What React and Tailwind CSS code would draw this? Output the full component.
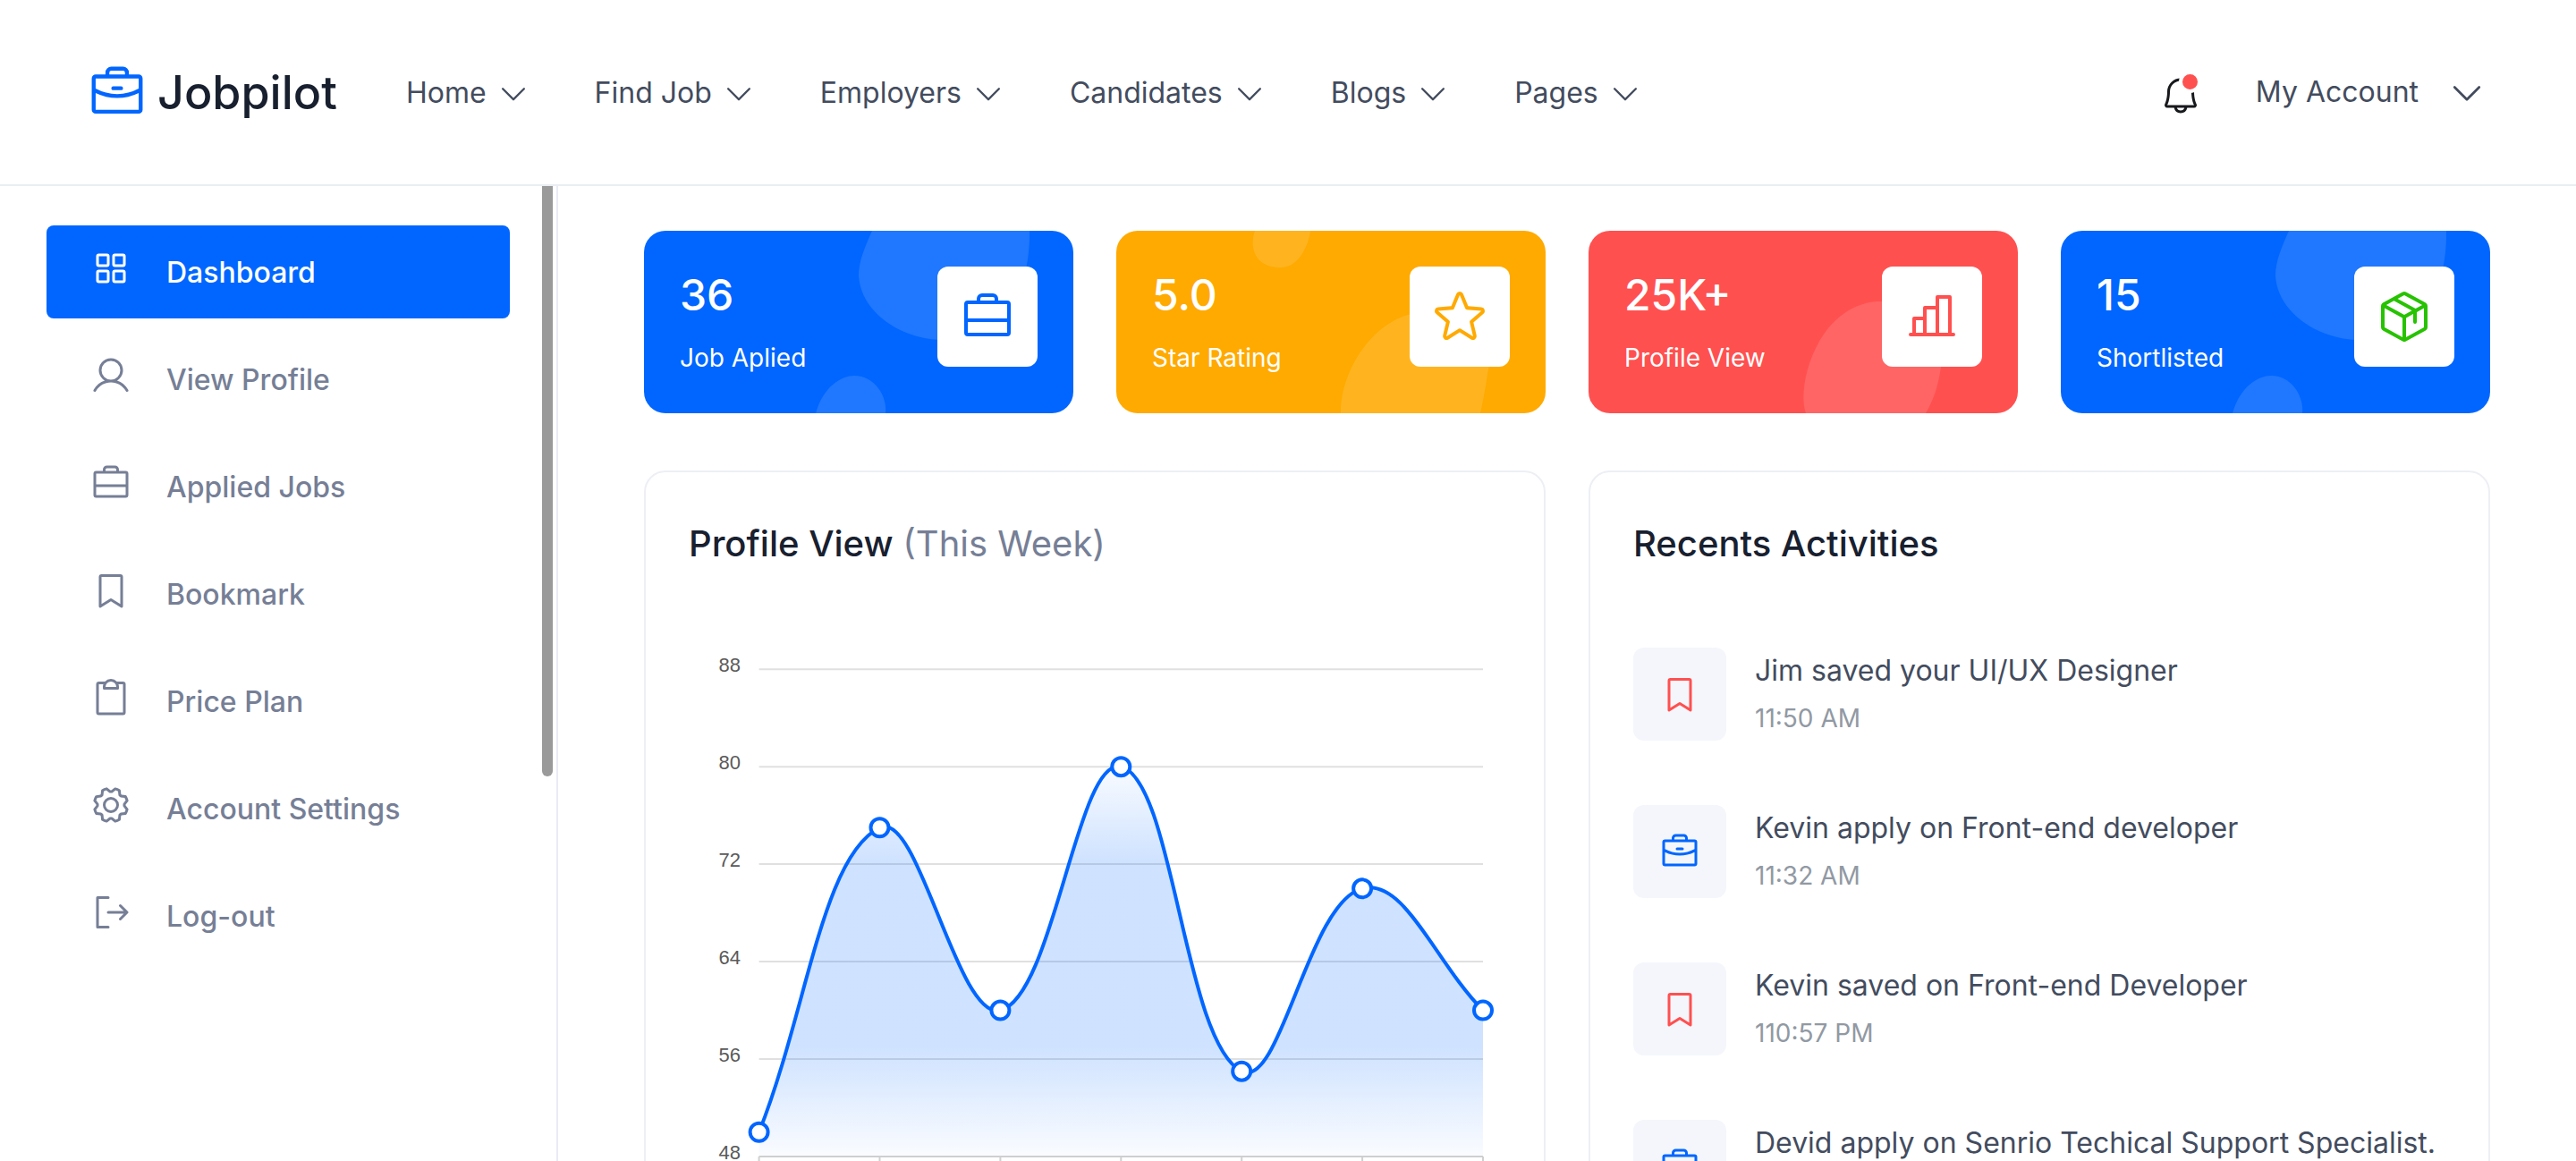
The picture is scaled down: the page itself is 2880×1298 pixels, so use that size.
import React from "react";
import {
  PiBell,
  PiBookmarkSimple,
  PiBriefcase,
  PiCaretDown,
  PiChartBar,
  PiClipboard,
  PiGear,
  PiPackage,
  PiSignOut,
  PiSquaresFour,
  PiStar,
  PiUser,
} from "react-icons/pi";

const navItems = ["Home", "Find Job", "Employers", "Candidates", "Blogs", "Pages"];

// briefcase with the straight line, the phosphor one has a curve
const BriefcaseLine = ({ size, className }) => (
  <svg width={size} height={size} viewBox="0 0 256 256" fill="none" stroke="currentColor" strokeWidth="16" strokeLinejoin="round" className={className}>
    <rect x="32" y="64" width="192" height="144" rx="8" />
    <path d="M88 64V48a16 16 0 0 1 16-16h48a16 16 0 0 1 16 16v16" />
    <path d="M32 144H224" />
  </svg>
);

const sideItems = [
  { label: "Dashboard", Icon: PiSquaresFour, active: true },
  { label: "View Profile", Icon: PiUser },
  { label: "Applied Jobs", Icon: BriefcaseLine },
  { label: "Bookmark", Icon: PiBookmarkSimple },
  { label: "Price Plan", Icon: PiClipboard },
  { label: "Account Settings", Icon: PiGear },
  { label: "Log-out", Icon: PiSignOut },
];

const blobsBlue = ["M255 0C246 20 240 35 240 50C242 90 285 120 330 122C400 124 432 70 431 0Z", "M192 204C200 175 220 162 235 162C258 162 272 185 270 204Z"];

const stats = [
  { value: "36", label: "Job Aplied", bg: "bg-[#0066ff]", blobs: blobsBlue, Icon: BriefcaseLine, iconColor: "text-[#0066ff]" },
  {
    value: "5.0",
    label: "Star Rating",
    bg: "bg-[#ffaa00]",
    blobs: ["M155 0C148 20 156 42 185 41C205 40 215 15 217 0Z", "M251 204C250 160 285 100 335 92C390 85 425 120 415 160C413 175 410 190 407 204Z"],
    Icon: PiStar,
    iconColor: "text-[#ffaa00]",
  },
  {
    value: "25K+",
    label: "Profile View",
    bg: "bg-[#ff5050]",
    blobs: ["M243 204C232 175 255 85 322 79C375 78 400 110 394 152C391 175 385 190 377 204Z"],
    Icon: PiChartBar,
    iconColor: "text-[#ff5050]",
  },
  { value: "15", label: "Shortlisted", bg: "bg-[#0066ff]", blobs: blobsBlue, Icon: PiPackage, iconColor: "text-[#27c200]" },
];

const activities = [
  { text: "Jim saved your UI/UX Designer", time: "11:50 AM", Icon: PiBookmarkSimple, color: "text-[#ff5050]" },
  { text: "Kevin apply on Front-end developer", time: "11:32 AM", Icon: PiBriefcase, color: "text-[#0066ff]" },
  { text: "Kevin saved on Front-end Developer", time: "110:57 PM", Icon: PiBookmarkSimple, color: "text-[#ff5050]" },
  { text: "Devid apply on Senrio Techical Support Specialist.", Icon: PiBriefcase, color: "text-[#0066ff]" },
];

// chart coordinates, svg starts at x=770 y=696 of the page
const CHART = { left: 78.6, step: 134.9, bottom: 599, unit: 13.62 };
const values = [50, 75, 60, 80, 55, 70, 60];
const points = values.map((v, i) => ({
  x: CHART.left + i * CHART.step,
  y: CHART.bottom - (v - 48) * CHART.unit,
}));
const ticks = [88, 80, 72, 64, 56, 48];
const tickY = (t) => CHART.bottom - (t - 48) * CHART.unit;

// same control points as chart.js with tension .4
const controls = points.map((p, i) => {
  const prev = points[i - 1] || p;
  const next = points[i + 1] || p;
  const d01 = Math.hypot(p.x - prev.x, p.y - prev.y);
  const d12 = Math.hypot(next.x - p.x, next.y - p.y);
  const sum = d01 + d12;
  const fa = (0.4 * d01) / sum;
  const fb = (0.4 * d12) / sum;
  return {
    px: p.x - fa * (next.x - prev.x),
    py: p.y - fa * (next.y - prev.y),
    nx: p.x + fb * (next.x - prev.x),
    ny: p.y + fb * (next.y - prev.y),
  };
});
const linePath = points.reduce((d, p, i) => {
  if (i === 0) return `M${p.x} ${p.y}`;
  const a = controls[i - 1];
  const b = controls[i];
  return `${d}C${a.nx} ${a.ny} ${b.px} ${b.py} ${p.x} ${p.y}`;
}, "");
const areaPath = `${linePath}L${points[6].x} ${CHART.bottom}L${points[0].x} ${CHART.bottom}Z`;

const Chart = () => (
  <svg width="908" height="620" className="block mt-14 overflow-visible">
    <defs>
      <linearGradient id="area" gradientUnits="userSpaceOnUse" x1="0" y1="160" x2="0" y2="599">
        <stop offset="0" stopColor="#0066ff" stopOpacity="0.02" />
        <stop offset="0.25" stopColor="#0066ff" stopOpacity="0.19" />
        <stop offset="0.72" stopColor="#0066ff" stopOpacity="0.19" />
        <stop offset="1" stopColor="#0066ff" stopOpacity="0.02" />
      </linearGradient>
    </defs>
    {ticks.map((t) => (
      <g key={t}>
        <line x1={CHART.left} x2={points[6].x} y1={tickY(t)} y2={tickY(t)} stroke={t === 48 ? "#d0d0d0" : "#e0e0e0"} strokeWidth="2" />
        <text x="58" y={tickY(t) + 3} textAnchor="end" fontSize="22" fill="#5a5a5a" fontFamily="'Liberation Sans', sans-serif">
          {t}
        </text>
      </g>
    ))}
    {points.map((p) => (
      <line key={p.x} x1={p.x} x2={p.x} y1={CHART.bottom} y2={CHART.bottom + 10} stroke="#d0d0d0" strokeWidth="2" />
    ))}
    <path d={areaPath} fill="url(#area)" />
    <path d={linePath} fill="none" stroke="#0066ff" strokeWidth="4" />
    {points.map((p) => (
      <circle key={p.x} cx={p.x} cy={p.y} r="10" fill="white" stroke="#0066ff" strokeWidth="4" />
    ))}
  </svg>
);

const App = () => {
  return (
    <div className="h-[1298px] w-[2880px] overflow-hidden bg-white [font-family:Inter,sans-serif]">
      {/* Header */}
      <header className="h-[208px] border-b-2 border-[#e9eef3] flex items-center pl-[96px] pr-[100px]">
        <div className="flex items-center gap-[10px]">
          <PiBriefcase size={70} className="text-[#0066ff]" />
          <span className="pt-[2px] text-[52px] font-medium text-[#18202f]">Jobpilot</span>
        </div>
        <nav className="flex items-center gap-[72px] ml-[77px] pt-[2px]">
          {navItems.map((item) => (
            <div key={item} className="flex items-center gap-[11px] text-[32px] text-[#434c5e]">
              {item}
              <PiCaretDown size={38} />
            </div>
          ))}
        </nav>
        <div className="ml-auto flex items-center text-[#434c5e]">
          <div className="relative translate-x-[2px] translate-y-[4px]">
            <PiBell size={48} className="text-[#18191c]" />
            <span className="absolute top-[-4px] right-[1px] w-[25px] h-[25px] rounded-full bg-[#ff5050] border-4 border-white"></span>
          </div>
          <span className="ml-[62px] text-[32px]">My Account</span>
          <PiCaretDown size={44} className="ml-[32px]" />
        </div>
      </header>

      <div className="flex h-[1090px]">
        {/* Sidebar */}
        <aside className="relative w-[624px] shrink-0 border-r-2 border-[#e9ebf5] pl-[52px] pr-[52px] pt-[44px] flex flex-col gap-4">
          {sideItems.map(({ label, Icon, active }) => (
            <div
              key={label}
              className={`h-[104px] shrink-0 rounded-lg flex items-center pl-[48px] gap-[38px] text-[32px] font-medium ${
                active ? "bg-[#0066ff] text-white" : "text-[#767f96]"
              }`}
            >
              <Icon size={48} className="-translate-y-1" />
              <span className="pt-[2px]">{label}</span>
            </div>
          ))}
          {/* scrollbar thumb */}
          <div className="absolute top-0 right-[4px] w-[12px] h-[660px] bg-[#9a9a9a] rounded-b-md"></div>
        </aside>

        {/* Main */}
        <main className="flex-1 pl-[96px] pr-[96px] pt-[50px]">
          <div className="grid grid-cols-4 gap-12">
            {stats.map(({ value, label, bg, blobs, Icon, iconColor }) => (
              <div key={label} className={`relative h-[204px] rounded-3xl overflow-hidden flex items-center justify-between px-10 text-white ${bg}`}>
                <svg className="absolute inset-0" width="480" height="204" fill="white" fillOpacity="0.12">
                  {blobs.map((d) => (
                    <path key={d} d={d} />
                  ))}
                </svg>
                <div className="relative">
                  <div className="pt-[2px] text-[48px] leading-[56px] font-medium">{value}</div>
                  <div className="mt-[22px] text-[28px] leading-[40px]">{label}</div>
                </div>
                <div className={`relative mb-3 w-[112px] h-[112px] rounded-xl bg-white flex items-center justify-center ${iconColor}`}>
                  <Icon size={64} />
                </div>
              </div>
            ))}
          </div>

          <div className="grid grid-cols-2 gap-12 mt-16">
            <section className="border-2 border-[#edeff5] rounded-3xl p-12 pt-[50px] h-[900px]">
              <h2 className="text-[40px] leading-[60px] font-medium text-[#18202f]">
                Profile View <span className="font-normal text-[#767f96]">(This Week)</span>
              </h2>
              <Chart />
            </section>

            <section className="border-2 border-[#edeff5] rounded-3xl p-12 pt-[50px] h-[900px]">
              <h2 className="text-[40px] leading-[60px] font-medium text-[#18202f]">Recents Activities</h2>
              <div className="mt-[86px] flex flex-col gap-[72px]">
                {activities.map(({ text, time, Icon, color }) => (
                  <div key={text} className="flex gap-8">
                    <div className={`w-[104px] h-[104px] shrink-0 rounded-xl bg-[#f4f6fb] flex items-center justify-center ${color}`}>
                      <Icon size={48} />
                    </div>
                    <div className="pt-[2px]">
                      <div className="text-[32px] leading-[48px] text-[#434c5e]">{text}</div>
                      {time && <div className="mt-2 text-[28px] leading-[42px] text-[#9199a3]">{time}</div>}
                    </div>
                  </div>
                ))}
              </div>
            </section>
          </div>
        </main>
      </div>
    </div>
  );
};

export default App;
